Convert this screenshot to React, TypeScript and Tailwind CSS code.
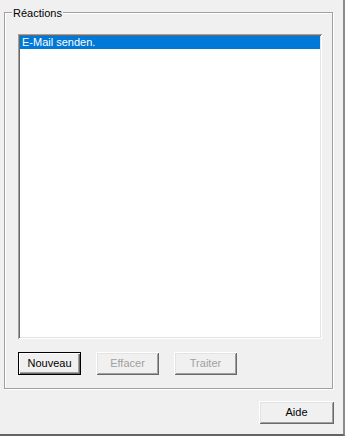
const raised =
  'shadow-[inset_1px_1px_0_#ffffff,inset_-1px_-1px_0_#696969,inset_2px_2px_0_#e3e3e3,inset_-2px_-2px_0_#a0a0a0]'

interface WinButtonProps {
  label: string
  width: string
  disabled?: boolean
  isDefault?: boolean
}

const WinButton = ({ label, width, disabled, isDefault }: WinButtonProps) => {
  if (isDefault) {
    return (
      <button className={`${width} h-[23px] border border-black bg-[#f0f0f0] p-0`}>
        <div className="flex h-full w-full items-center justify-center shadow-[inset_1px_1px_0_#ffffff,inset_-1px_-1px_0_#696969,inset_-2px_-2px_0_#a0a0a0] text-black">
          {label}
        </div>
      </button>
    )
  }
  return (
    <button
      disabled={disabled}
      className={`${width} flex h-[23px] items-center justify-center bg-[#f0f0f0] p-0 ${raised} ${
        disabled ? 'text-[#a0a0a0]' : 'text-black'
      }`}
    >
      {label}
    </button>
  )
}

export default function App() {
  return (
    <div className="flex h-[436px] w-[345px] flex-col border-r-2 border-b-2 border-r-[#8c8c8c] border-b-[#646464] bg-[#f0f0f0] pl-[4px] pt-[12px] font-['Liberation_Sans',Arial,sans-serif] text-[11px] leading-[13px] text-black">
      {/* group box */}
      <div className="relative h-[377px] w-[329px] border border-[#a0a0a0] pl-[13px] pt-[21px] shadow-[inset_1px_1px_0_#ffffff,1px_1px_0_#ffffff]">
        <span className="absolute left-[7px] top-[-6px] bg-[#f0f0f0] px-[1px]">Réactions</span>

        <div className="h-[305px] w-[304px] bg-white p-[2px] shadow-[inset_1px_1px_0_#a0a0a0,inset_-1px_-1px_0_#ffffff,inset_2px_2px_0_#696969,inset_-2px_-2px_0_#e3e3e3]">
          <div className="flex h-[13px] items-center bg-[#0078d7] pl-[2px] text-white">E-Mail senden.</div>
        </div>

        <div className="mt-[13px] flex gap-[15px]">
          <WinButton label="Nouveau" width="w-[63px]" isDefault />
          <WinButton label="Effacer" width="w-[63px]" disabled />
          <WinButton label="Traiter" width="w-[63px]" disabled />
        </div>
      </div>

      <div className="mt-[12px] flex justify-end pr-[9px]">
        <WinButton label="Aide" width="w-[75px]" />
      </div>
    </div>
  )
}
